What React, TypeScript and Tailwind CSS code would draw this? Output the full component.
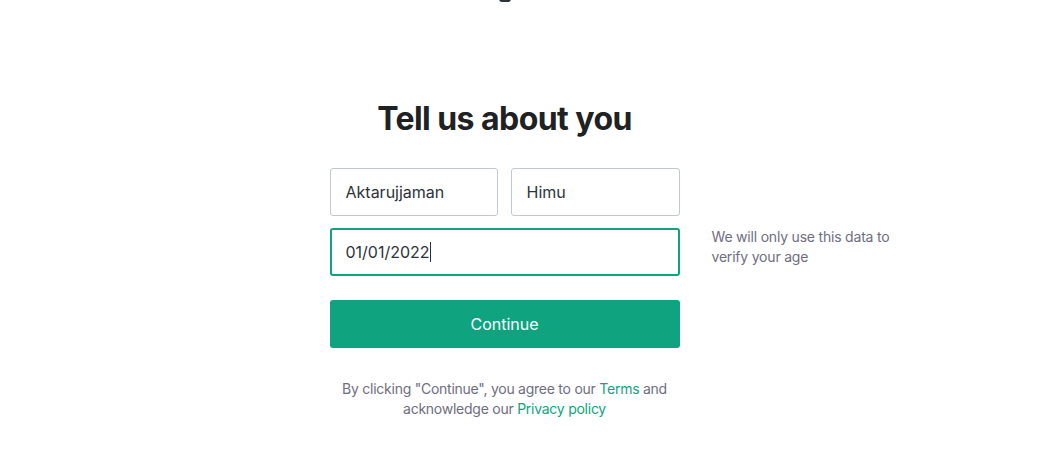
import React from 'react';

const font = { fontFamily: 'Inter, "Noto Sans", sans-serif' };

export default function App() {
  return (
    <div className="w-[1040px] h-[459px] bg-white overflow-hidden text-[#2d333a]" style={font}>
      {/* logo peeking at the top edge */}
      <div className="flex justify-center pr-[31px]">
        <div className="w-[12px] h-[3px] -mt-[1px] rounded-b-full bg-[#2d333a]"></div>
      </div>

      <div className="flex justify-center pr-[31px] pt-[97px]">
        <div className="w-[350px] flex flex-col">
          <h1 className="text-[32px] leading-[40px] font-bold text-center tracking-[-0.55px] text-[#202123]">
            Tell us about you
          </h1>

          <div className="mt-[29px] flex gap-[13px]">
            <input
              defaultValue="Aktarujjaman"
              className="w-[168px] h-[48px] rounded-[3px] border border-[#c2c8d0] px-[15px] text-[16px] outline-none"
            />
            <input
              defaultValue="Himu"
              className="w-[169px] h-[48px] rounded-[3px] border border-[#c2c8d0] px-[15px] text-[16px] outline-none"
            />
          </div>

          <div className="relative mt-[12px]">
            <div className="h-[48px] rounded-[3px] border-2 border-[#10a37f] px-[14px] flex items-center text-[16px]">
              01/01/2022
              <span className="w-px h-[20px] bg-[#2d333a]"></span>
            </div>
            <p className="absolute left-full -top-[1px] ml-[32px] w-[200px] text-[14px] leading-[20px] tracking-[-0.2px] text-[#6e6e80]">
              We will only use this data to verify your age
            </p>
          </div>

          <button className="mt-[24px] h-[48px] rounded-[3px] bg-[#10a37f] text-white text-[16px]">
            Continue
          </button>

          <p className="mt-[31px] text-center text-[14px] leading-[20px] tracking-[-0.25px] text-[#6e6e80]">
            By clicking "Continue", you agree to our <span className="text-[#10a37f]">Terms</span> and
            <br />
            acknowledge our <span className="text-[#10a37f]">Privacy policy</span>
          </p>
        </div>
      </div>
    </div>
  );
}
